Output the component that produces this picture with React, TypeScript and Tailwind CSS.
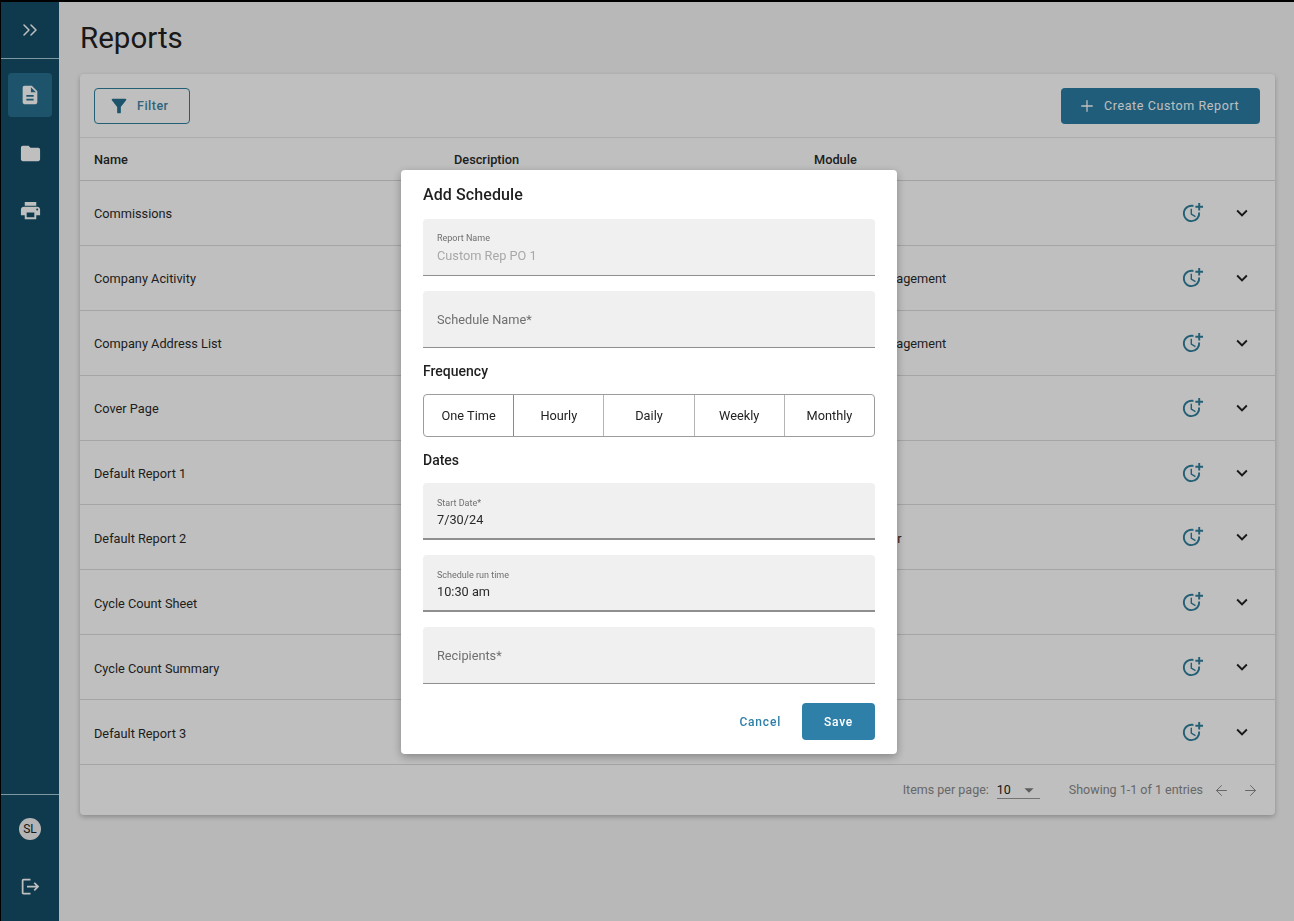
import { ArrowLeft, ArrowRight, ChevronsRight, Plus } from "lucide-react";
import {
  MdArrowDropDown,
  MdDescription,
  MdExpandMore,
  MdFilterAlt,
  MdFolder,
  MdLogout,
  MdMoreTime,
  MdPrint,
} from "react-icons/md";

// module text is mostly behind the dialog, only the long ones stick out
const rows = [
  { name: "Commissions", module: "" },
  { name: "Company Acitivity", module: "Company Management" },
  { name: "Company Address List", module: "Company Management" },
  { name: "Cover Page", module: "" },
  { name: "Default Report 1", module: "" },
  { name: "Default Report 2", module: "Purchase Order" },
  { name: "Cycle Count Sheet", module: "" },
  { name: "Cycle Count Summary", module: "" },
  { name: "Default Report 3", module: "" },
];

const frequencies = ["One Time", "Hourly", "Daily", "Weekly", "Monthly"];

function Sidebar() {
  return (
    <aside className="w-[58px] shrink-0 bg-[#154e68] flex flex-col text-white">
      <div className="h-[57px] shrink-0 flex items-center justify-center border-b border-[#a9cbd8]">
        <ChevronsRight className="w-[24px] h-[24px]" strokeWidth={1.5} />
      </div>
      <div className="flex flex-col items-center pt-[14px]">
        <div className="w-[44px] h-[44px] rounded-[4px] bg-[#27708f] flex items-center justify-center">
          <MdDescription size={22} />
        </div>
        <div className="w-[44px] h-[44px] mt-[14px] flex items-center justify-center">
          <MdFolder size={23} />
        </div>
        <div className="w-[44px] h-[44px] mt-[13px] flex items-center justify-center">
          <MdPrint size={23} />
        </div>
      </div>
      <div className="mt-auto h-[127px] border-t border-[#a9cbd8] flex flex-col items-center">
        <div className="mt-[23px] w-[22px] h-[22px] rounded-full bg-[#f0f0f0] text-[#222] text-[12px] flex items-center justify-center">
          SL
        </div>
        <MdLogout size={21} className="mt-[36px]" />
      </div>
    </aside>
  );
}

function ReportRow({ name, module }: { name: string; module: string }) {
  return (
    <div className="flex-1 flex items-center border-b border-[#dcdcdc] pl-[14px] pr-[22px] text-[12.75px] text-[#2a2a2a]">
      <div className="w-[360px] pt-[2px]">{name}</div>
      <div className="w-[360px]" />
      <div className="flex-1 pt-[2px]">{module}</div>
      <MdMoreTime size={23} className="text-[#2f7f9c] mr-[27px] -mt-[1px]" />
      <MdExpandMore size={22} className="text-[#222]" />
    </div>
  );
}

function Field({
  label,
  value,
  placeholder,
  muted,
  thick,
}: {
  label?: string;
  value?: string;
  placeholder?: string;
  muted?: boolean;
  thick?: boolean;
}) {
  return (
    <div
      className={`h-[57px] bg-[#f0f0f0] rounded-t-[4px] px-[14px] flex flex-col justify-center border-b-[#8f8f8f] ${
        thick ? "border-b-2 pt-[2px]" : "border-b"
      }`}
    >
      {placeholder ? (
        <div className="text-[12.75px] text-[#6f6f6f] pt-[2px]">{placeholder}</div>
      ) : (
        <>
          <div className={`text-[9px] leading-[12px] text-[#6f6f6f] ${thick ? "mt-[3px]" : "mt-[2px]"}`}>{label}</div>
          <div
            className={`text-[12.75px] leading-[18px] ${thick ? "mt-[2px]" : "mt-[3px]"} ${
              muted ? "text-[#a8a8a8]" : "text-[#2a2a2a]"
            }`}
          >
            {value}
          </div>
        </>
      )}
    </div>
  );
}

function ScheduleModal() {
  return (
    <div className="fixed inset-0 z-10 bg-black/25 flex justify-center items-start pt-[170px] pl-[4px]">
      <div className="w-[496px] h-[584px] bg-white rounded-[4px] shadow-[0_3px_10px_rgba(0,0,0,0.3)] px-[22px]">
        <h2 className="h-[49px] pt-[15px] text-[16px] font-medium leading-[20px] text-[#1f1f1f] tracking-[0.1px]">
          Add Schedule
        </h2>
        <Field label="Report Name" value="Custom Rep PO 1" muted />
        <div className="h-[15px]" />
        <Field placeholder="Schedule Name*" />
        <div className="h-[46px] flex items-center text-[14px] font-medium text-[#1f1f1f]">Frequency</div>
        <div className="h-[43px] flex border border-[#9c9c9c] rounded-[4px]">
          {frequencies.map((f, i) => (
            <div
              key={f}
              className={`flex-1 flex items-center justify-center text-[12.75px] text-[#222] ${
                i > 0 ? "border-l " : ""
              }${i === 1 ? "border-[#8a8a8a]" : "border-[#b5b5b5]"}`}
            >
              {f}
            </div>
          ))}
        </div>
        <div className="h-[46px] flex items-center text-[14px] font-medium text-[#1f1f1f]">Dates</div>
        <Field label="Start Date*" value="7/30/24" thick />
        <div className="h-[15px]" />
        <Field label="Schedule run time" value="10:30 am" thick />
        <div className="h-[15px]" />
        <Field placeholder="Recipients*" />
        <div className="flex justify-end items-center mt-[19px]">
          <span className="text-[12px] font-medium tracking-[0.8px] text-[#2e80a8] mr-[21px]">Cancel</span>
          <div className="w-[73px] h-[37px] rounded-[4px] bg-[#2e80a8] text-white text-[12px] font-medium tracking-[0.8px] flex items-center justify-center">
            Save
          </div>
        </div>
      </div>
    </div>
  );
}

export default function App() {
  return (
    <div className="h-[921px] overflow-hidden flex bg-[#f6f6f6] border-t-2 border-l border-black font-['Roboto',sans-serif]">
      <Sidebar />
      <main className="flex-1 pl-[21px] pr-[19px]">
        <h1 className="text-[29.5px] leading-[36px] text-[#222] pt-[18px] h-[72px] box-border">Reports</h1>
        <section className="h-[741px] bg-white rounded-[4px] shadow-[0_2px_5px_rgba(0,0,0,0.25)] flex flex-col">
          <div className="h-[64px] shrink-0 flex items-center justify-between pl-[14px] pr-[15px] border-b border-[#e6e6e6]">
            <div className="w-[96px] h-[36px] border border-[#2f7f9c] rounded-[4px] flex items-center pl-[13px] text-[#27708f]">
              <MdFilterAlt size={22} />
              <span className="ml-[7px] text-[12.5px] font-medium tracking-[0.5px] text-[#3c86a8] pt-[1px]">Filter</span>
            </div>
            <div className="w-[199px] h-[36px] rounded-[4px] bg-[#2a7ca5] text-white flex items-center pl-[17px]">
              <Plus className="w-[18px] h-[18px]" strokeWidth={1.7} />
              <span className="ml-[8px] text-[12.5px] tracking-[0.6px] pt-[2px]">Create Custom Report</span>
            </div>
          </div>
          <div className="h-[43px] shrink-0 flex items-center border-b border-[#d8d8d8] pl-[14px] pt-[2px] text-[12.75px] font-medium text-[#2a2a2a]">
            <div className="w-[360px]">Name</div>
            <div className="w-[360px]">Description</div>
            <div>Module</div>
          </div>
          <div className="h-[584px] shrink-0 flex flex-col">
            {rows.map((r) => (
              <ReportRow key={r.name} name={r.name} module={r.module} />
            ))}
          </div>
          <div className="flex-1 flex items-center justify-end pr-[16px] pt-[1px] text-[12.5px] text-[#8a8a8a]">
            <span>Items per page:</span>
            <div className="ml-[8px] w-[43px] h-[16px] flex items-center justify-between border-b border-[#9a9a9a] text-[#222]">
              <span>10</span>
              <MdArrowDropDown size={22} className="text-[#7c7c7c]" />
            </div>
            <span className="ml-[29px]">Showing 1-1 of 1 entries</span>
            <ArrowLeft className="ml-[10px] w-[17px] h-[17px]" strokeWidth={1.4} />
            <ArrowRight className="ml-[12px] w-[17px] h-[17px]" strokeWidth={1.4} />
          </div>
        </section>
      </main>
      <ScheduleModal />
    </div>
  );
}
